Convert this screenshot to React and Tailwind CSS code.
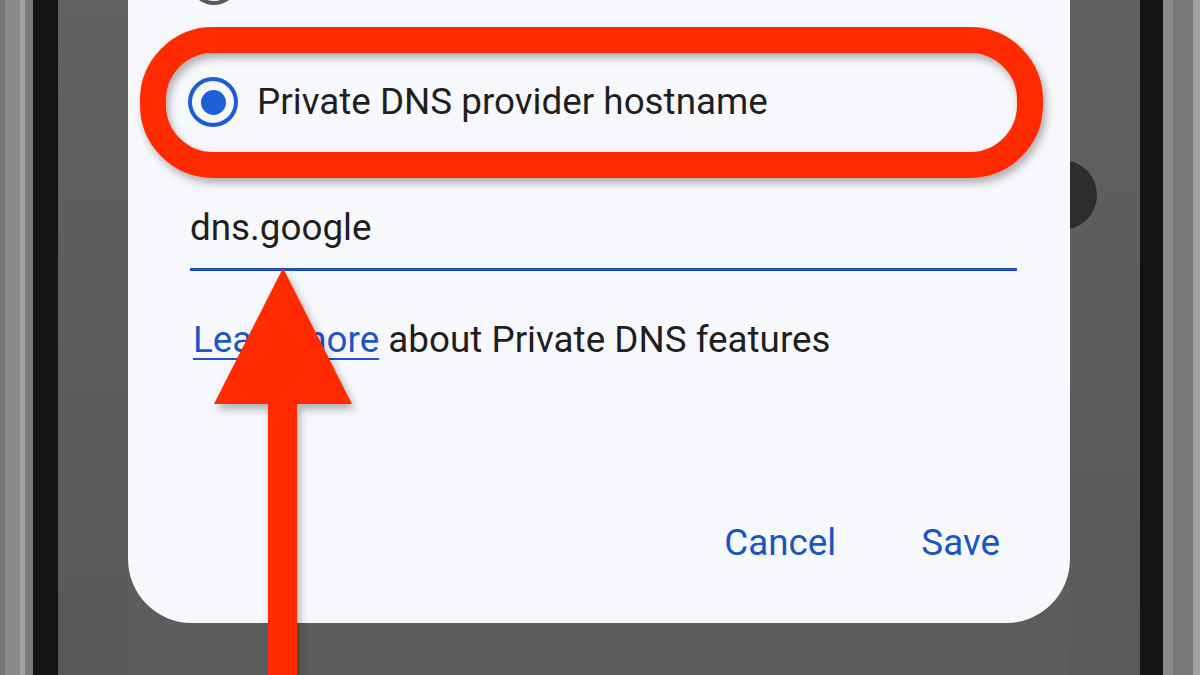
import React from "react";

export default function App() {
  const font = { fontFamily: "Roboto, 'Noto Sans', Arial, sans-serif" };
  return (
    <div className="relative w-[1200px] h-[675px] overflow-hidden bg-[#5d5d5d] flex" style={font}>
      {/* left bezel */}
      <div className="flex h-full w-[128px] shrink-0">
        <div className="w-[5px] bg-[#767676]" />
        <div className="w-[15px] bg-[#8a8a8a]" />
        <div className="w-[5px] bg-[#a2a2a2]" />
        <div className="w-[8px] bg-[#7c7c7c]" />
        <div className="w-[25px] bg-[#141414]" />
        <div className="flex-1 bg-gradient-to-b from-[#616161] to-[#585858]" />
      </div>

      {/* dark round element behind dialog */}
      <div className="absolute left-[1027px] top-[160px] w-[70px] h-[70px] rounded-full bg-[#2b2d2f]" />

      {/* center */}
      <div className="relative z-10 flex w-[942px] shrink-0 flex-col">
        <div className="h-[623px] rounded-b-[64px] bg-[#f7f8fc] flex flex-col pl-[62px] pr-[53px]">
          {/* partial previous radio */}
          <div className="h-[77px] relative">
            <div className="absolute left-[-1px] top-[-45px] w-[50px] h-[50px] rounded-full border-[4px] border-[#5a5a5a]" />
          </div>
          {/* radio row */}
          <div className="h-[50px] flex items-center ml-[-2px]">
            <div className="w-[50px] h-[50px] rounded-full border-[4px] border-[#1a5dd4] flex items-center justify-center">
              <div className="w-[25px] h-[25px] rounded-full bg-[#1c5fd8]" />
            </div>
            <span className="ml-[19px] text-[36.8px] leading-[40px] text-[#1f1f1f]">Private DNS provider hostname</span>
          </div>
          {/* input */}
          <div className="mt-[81px] border-b-[3px] border-[#1b4fc6] pb-[20px]">
            <div className="text-[36.8px] leading-[40px] text-[#1f1f1f]">dns.google</div>
          </div>
          {/* learn more */}
          <div className="mt-[49px] text-[36.8px] leading-[40px] text-[#1f1f1f] ml-[3px]">
            <span className="text-[#1f55c4] underline decoration-[2px] underline-offset-[6px]">Learn more</span>
            <span> about Private DNS features</span>
          </div>
          {/* buttons */}
          <div className="mt-[163px] flex justify-end gap-[85px] pr-[17px] text-[36.8px] leading-[40px] text-[#1a55c4]">
            <span>Cancel</span>
            <span>Save</span>
          </div>
        </div>
        <div className="flex-1" />
      </div>

      {/* right bezel */}
      <div className="flex h-full w-[130px] shrink-0">
        <div className="flex-1 bg-gradient-to-b from-[#606060] to-[#5a5a5a]" />
        <div className="w-[23px] bg-[#141414]" />
        <div className="w-[10px] bg-[#8a8a8a]" />
        <div className="w-[20px] bg-[#787878]" />
        <div className="w-[7px] bg-[#a0a0a0]" />
      </div>

      {/* annotations */}
      <svg className="absolute inset-0 z-20 pointer-events-none" width="1200" height="675" viewBox="0 0 1200 675">
        <defs>
          <filter id="sh" x="-10%" y="-10%" width="120%" height="130%">
            <feDropShadow dx="3" dy="5" stdDeviation="4" floodColor="#000" floodOpacity="0.3" />
          </filter>
        </defs>
        <rect x="153" y="40" width="877" height="125" rx="60" ry="60" fill="none" stroke="#fe2a00" strokeWidth="26" filter="url(#sh)" />
        <path d="M283 268 L352 404 L297 404 L297 690 L268 690 L268 404 L214 404 Z" fill="#fe2a00" filter="url(#sh)" />
      </svg>
    </div>
  );
}
